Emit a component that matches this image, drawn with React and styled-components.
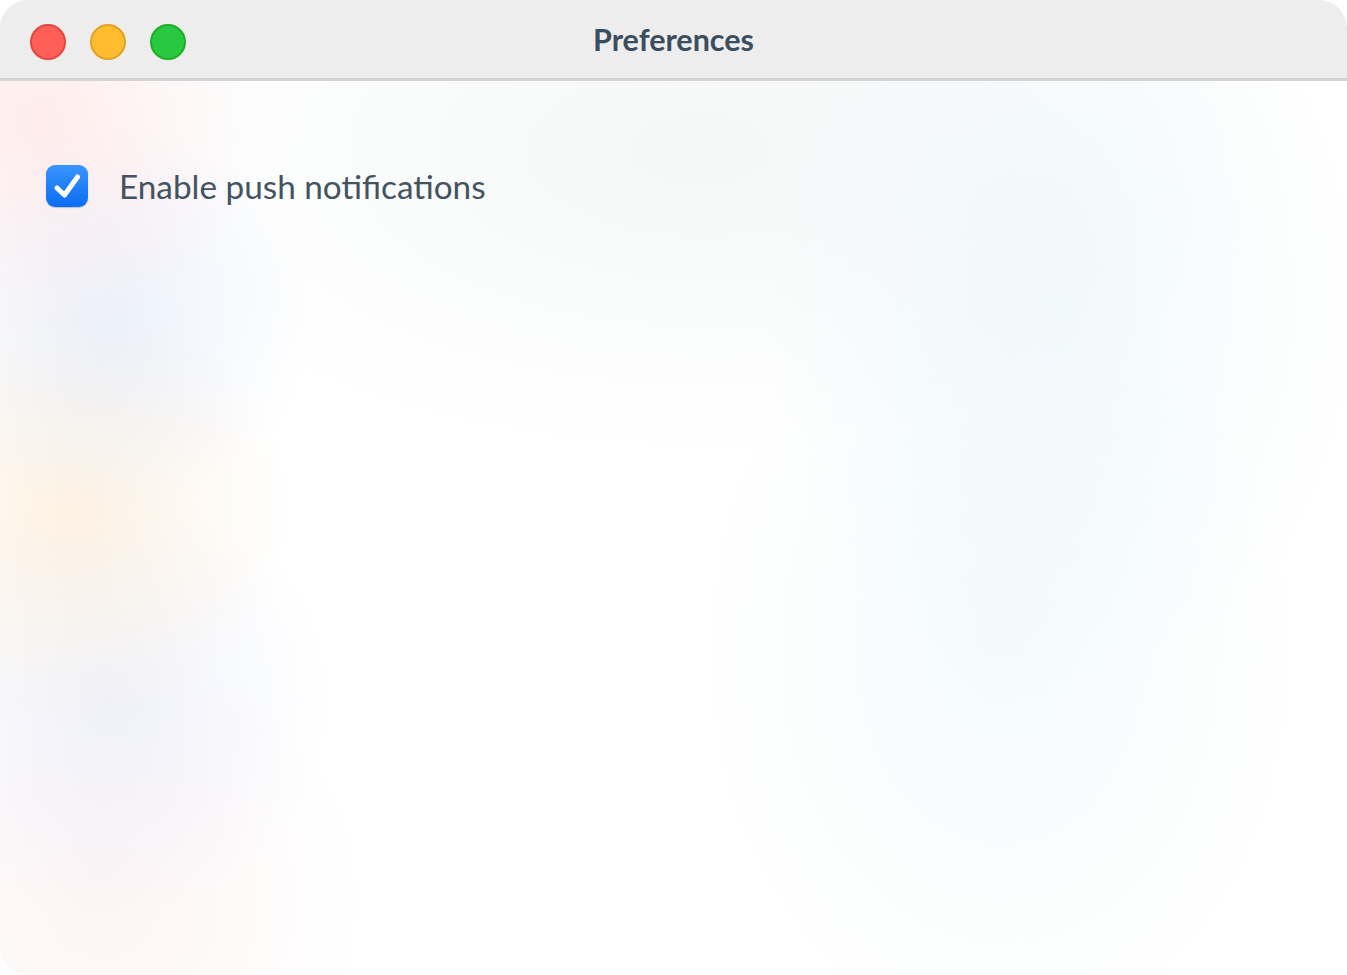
import React, { useState } from 'react'
import styled, { createGlobalStyle } from 'styled-components'

const Global = createGlobalStyle`
  html, body {
    margin: 0;
    padding: 0;
    background: #ffffff;
  }
  body {
    font-family: Lato, 'Noto Sans', sans-serif;
  }
`

const Window = styled.div`
  position: relative;
  width: 1347px;
  height: 975px;
  border-radius: 28px;
  overflow: hidden;
  display: flex;
  flex-direction: column;
  background:
    radial-gradient(circle at 40px 120px, rgba(255, 200, 200, 0.35), transparent 220px),
    radial-gradient(circle at 110px 320px, rgba(200, 215, 245, 0.35), transparent 200px),
    radial-gradient(circle at 70px 510px, rgba(253, 225, 185, 0.4), transparent 220px),
    radial-gradient(circle at 110px 700px, rgba(205, 215, 245, 0.3), transparent 220px),
    radial-gradient(circle at 100px 900px, rgba(250, 225, 225, 0.35), transparent 260px),
    radial-gradient(ellipse 300px 400px at 1060px 300px, rgba(215, 238, 245, 0.3), transparent),
    radial-gradient(ellipse 300px 400px at 1000px 650px, rgba(215, 238, 245, 0.25), transparent),
    radial-gradient(ellipse 600px 300px at 700px 150px, rgba(235, 240, 240, 0.5), transparent),
    #ffffff;
`

const TitleBar = styled.div`
  position: relative;
  height: 78px;
  flex-shrink: 0;
  background: #eeedee;
  border-bottom: 3px solid #d5d3d6;
  display: flex;
  align-items: center;
  justify-content: center;
`

const Lights = styled.div`
  position: absolute;
  left: 30px;
  top: 24px;
  display: flex;
  gap: 24px;
`

const Light = styled.span`
  width: 32px;
  height: 32px;
  border-radius: 50%;
  background: ${(p) => p.fill};
  border: 2px solid ${(p) => p.edge};
`

const Title = styled.h1`
  margin: 0 0 1px;
  font-family: Lato, sans-serif;
  font-weight: 700;
  font-size: 30.5px;
  color: #3b4e5e;
`

const Content = styled.div`
  flex: 1;
  padding: 84px 46px;
`

const Option = styled.label`
  display: flex;
  align-items: center;
  gap: 31px;
  cursor: pointer;
`

const Box = styled.span`
  width: 42px;
  height: 42px;
  border-radius: 9px;
  display: flex;
  align-items: center;
  justify-content: center;
  background: ${(p) =>
    p.checked ? 'linear-gradient(180deg, #3a95ff 0%, #0a6df2 100%)' : '#ffffff'};
  border: ${(p) => (p.checked ? 'none' : '2px solid #b8bec6')};
  box-shadow: 0 1px 1px rgba(0, 60, 160, 0.25);
`

const Hidden = styled.input`
  position: absolute;
  opacity: 0;
  pointer-events: none;
`

const Text = styled.span`
  font-family: Lato, sans-serif;
  font-size: 33.3px;
  color: #43535f;
`

export default function App() {
  const [checked, setChecked] = useState(true)
  return (
    <>
      <Global />
      <Window>
        <TitleBar>
          <Lights>
            <Light fill='#ff5f57' edge='#e2463f' />
            <Light fill='#febc2e' edge='#e1a223' />
            <Light fill='#28c840' edge='#1dad2b' />
          </Lights>
          <Title>Preferences</Title>
        </TitleBar>
        <Content>
          <Option>
            <Hidden
              type='checkbox'
              checked={checked}
              onChange={(e) => setChecked(e.target.checked)}
            />
            <Box checked={checked}>
              {checked && (
                <svg width='34' height='34' viewBox='0 0 34 34'>
                  <path
                    d='M7 19 L14.5 26 L27.5 8'
                    fill='none'
                    stroke='#ffffff'
                    strokeWidth='5'
                    strokeLinecap='round'
                    strokeLinejoin='round'
                  />
                </svg>
              )}
            </Box>
            <Text>Enable push notifications</Text>
          </Option>
        </Content>
      </Window>
    </>
  )
}
